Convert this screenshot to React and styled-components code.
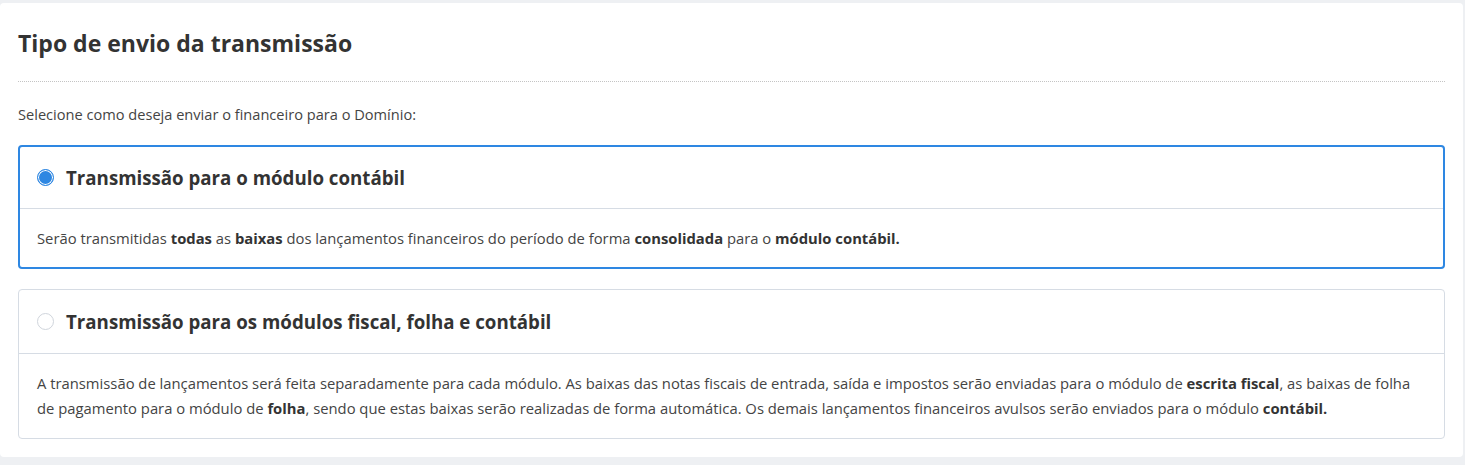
import React, { useState } from 'react';
import styled, { createGlobalStyle } from 'styled-components';

const GlobalStyle = createGlobalStyle`
  html, body {
    margin: 0;
    padding: 0;
    background-color: #eef0f3;
  }
  body {
    font-family: "Open Sans", "Noto Sans", sans-serif;
    color: #333;
  }
`;

const Page = styled.div`
  padding: 3px 2px 7px 0;
`;

const Panel = styled.section`
  background-color: #fff;
  border-radius: 4px;
  padding: 25px 18px 18px 18px;
`;

const Title = styled.h2`
  margin: 0;
  font-size: 23px;
  line-height: 30px;
  font-weight: 700;
  color: #333;
`;

const Divider = styled.hr`
  border: none;
  border-top: 1px dotted #c4c4c4;
  margin: 23px 0 22px 0;
`;

const Lead = styled.p`
  margin: 0 0 21px 0;
  font-size: 14.6px;
  line-height: 20px;
  color: #444;
`;

const Options = styled.div`
  display: flex;
  flex-direction: column;
  gap: 20px;
`;

const Card = styled.label`
  display: block;
  border: ${props => (props.selected ? '2px solid #2e87e2' : '1px solid #d6dce4')};
  border-radius: 4px;
  cursor: pointer;
  background-color: #fff;
`;

const CardHeader = styled.div`
  display: flex;
  align-items: center;
  gap: 12px;
  height: ${props => (props.selected ? '61px' : '63px')};
  padding: 0 ${props => (props.selected ? '17px' : '18px')};
  border-bottom: 1px solid #d6dce4;
`;

const Radio = styled.span`
  width: 17px;
  height: 17px;
  border-radius: 50%;
  box-sizing: border-box;
  flex-shrink: 0;
  border: 1px solid ${props => (props.checked ? '#2e87e2' : '#d0d5dc')};
  background-color: ${props => (props.checked ? '#2e87e2' : '#fff')};
  box-shadow: ${props => (props.checked ? 'inset 0 0 0 1px #fff' : 'none')};
`;

const CardTitle = styled.span`
  font-size: 18.7px;
  font-weight: 700;
  color: #333;
`;

const CardBody = styled.div`
  padding: ${props => (props.selected ? '17px 17px 16px 17px' : '17px 18px 17px 18px')};
  font-size: 14.8px;
  line-height: 25px;
  color: #444;

  b {
    color: #333;
    font-weight: 700;
  }
`;

const options = [
  {
    id: 'contabil',
    title: 'Transmissão para o módulo contábil',
    body: (
      <>
        Serão transmitidas <b>todas</b> as <b>baixas</b> dos lançamentos financeiros do período de forma{' '}
        <b>consolidada</b> para o <b>módulo contábil.</b>
      </>
    ),
  },
  {
    id: 'modulos',
    title: 'Transmissão para os módulos fiscal, folha e contábil',
    body: (
      <>
        A transmissão de lançamentos será feita separadamente para cada módulo. As baixas das notas fiscais de
        entrada, saída e impostos serão enviadas para o módulo de <b>escrita fiscal</b>, as baixas de folha de
        pagamento para o módulo de <b>folha</b>, sendo que estas baixas serão realizadas de forma automática. Os
        demais lançamentos financeiros avulsos serão enviados para o módulo <b>contábil.</b>
      </>
    ),
  },
];

const App = () => {
  const [selected, setSelected] = useState('contabil');

  return (
    <Page>
      <GlobalStyle />
      <Panel>
        <Title>Tipo de envio da transmissão</Title>
        <Divider />
        <Lead>Selecione como deseja enviar o financeiro para o Domínio:</Lead>
        <Options>
          {options.map(option => {
            const isSelected = selected === option.id;
            return (
              <Card key={option.id} selected={isSelected} onClick={() => setSelected(option.id)}>
                <CardHeader selected={isSelected}>
                  <Radio checked={isSelected} />
                  <CardTitle>{option.title}</CardTitle>
                </CardHeader>
                <CardBody selected={isSelected}>{option.body}</CardBody>
              </Card>
            );
          })}
        </Options>
      </Panel>
    </Page>
  );
};

export default App;
